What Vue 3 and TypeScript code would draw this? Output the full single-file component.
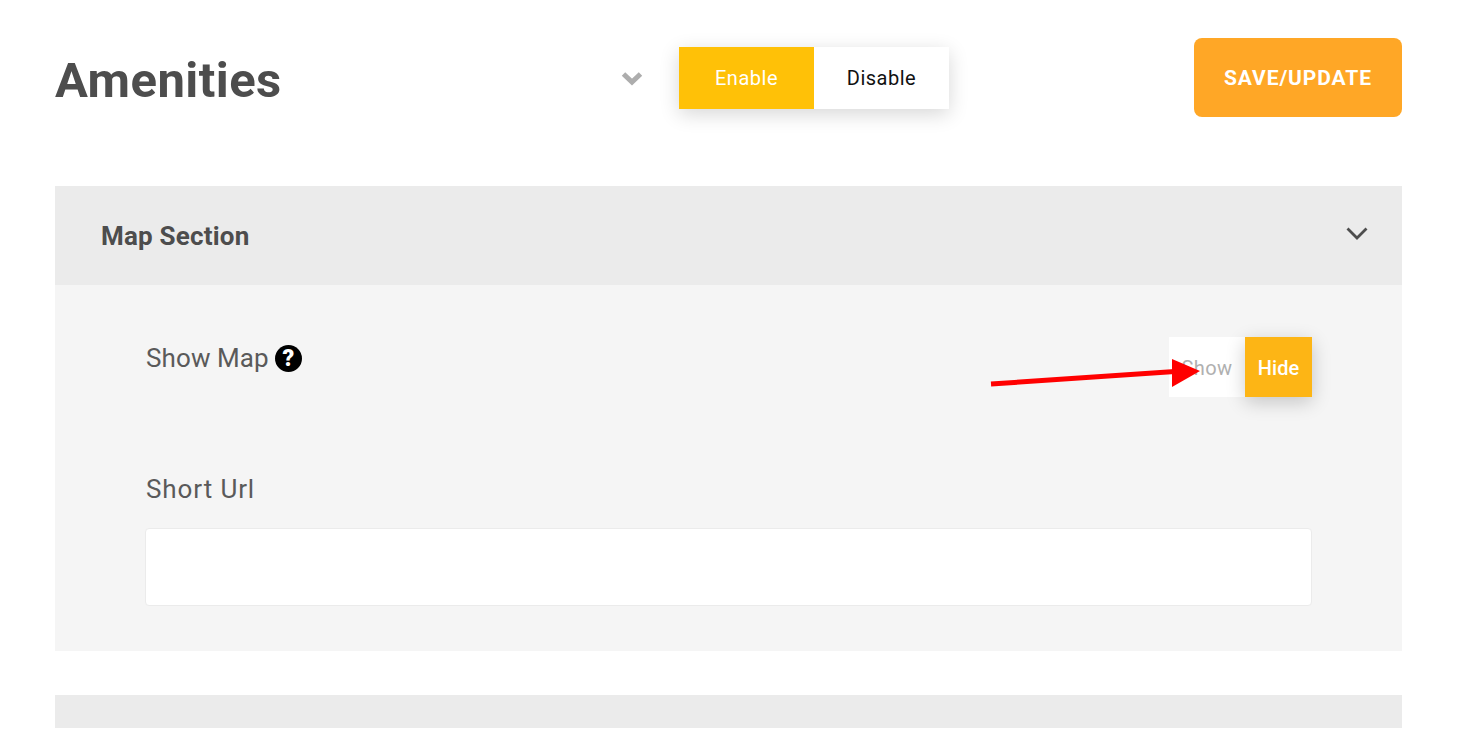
<script setup lang="ts">
import { ref } from 'vue';

const shortUrl = ref('');
</script>

<template>
	<div class="page">
		<header class="top">
			<h1 class="title">Amenities</h1>
			<div class="status">
				<svg class="status-chevron" width="24" height="16" viewBox="0 0 24 16">
					<path d="M3.5 4 L12 12 L20.5 4" fill="none" stroke="#adadad" stroke-width="5" />
				</svg>
				<div class="toggle-big">
					<span class="big-on">Enable</span>
					<span class="big-off">Disable</span>
				</div>
			</div>
			<button class="save" type="button">SAVE/UPDATE</button>
		</header>

		<section class="panel">
			<div class="panel-head">
				<h2>Map Section</h2>
				<svg width="24" height="16" viewBox="0 0 24 16">
					<path d="M2.5 2.5 L12 12 L21.5 2.5" fill="none" stroke="#4d4d4d" stroke-width="2.8" />
				</svg>
			</div>
			<div class="panel-body">
				<div class="row">
					<div class="label">
						Show Map
						<span class="help">?</span>
					</div>
					<div class="toggle-small">
						<span class="small-off">Show</span>
						<span class="small-on">Hide</span>
					</div>
				</div>
				<label class="label url-label" for="short-url">Short Url</label>
				<input id="short-url" v-model="shortUrl" class="url-input" type="text" />

				<svg class="arrow" width="220" height="40" viewBox="0 0 220 40">
					<path d="M1 30 L185 17.5" stroke="#ff0000" stroke-width="5" fill="none" />
					<path d="M182 5 L210 17 L182 33 Z" fill="#ff0000" />
				</svg>
			</div>
		</section>

		<section class="panel-next"></section>
	</div>
</template>

<style>
html,
body {
	background: #fff;
	overflow: hidden;
}
</style>

<style scoped>
.page {
	height: 733px;
	box-sizing: border-box;
	padding: 38px 60px 0 55px;
	font-family: Roboto, "Liberation Sans", sans-serif;
	color: #4d4d4d;
}

.top {
	display: flex;
	align-items: center;
	height: 79px;
}

.title {
	margin: 6px 0 0;
	font-size: 49px;
	font-weight: 700;
	line-height: 79px;
	width: 565px;
	letter-spacing: 0.45px;
}

.status {
	display: flex;
	align-items: center;
}

.status-chevron {
	margin-right: 35px;
}

.toggle-big {
	display: flex;
	height: 62px;
	line-height: 62px;
	text-align: center;
	font-size: 20px;
	letter-spacing: 0.5px;
	box-shadow: 0 5px 20px rgba(0, 0, 0, 0.16);
}

.big-on {
	width: 135px;
	background: #ffc107;
	color: #fff;
}

.big-off {
	width: 135px;
	background: #fff;
	color: #111;
}

.save {
	margin-left: auto;
	width: 208px;
	height: 79px;
	border: 0;
	border-radius: 8px;
	background: #ffa726;
	color: #fff;
	font-family: inherit;
	font-size: 21px;
	font-weight: 700;
	letter-spacing: 0.9px;
	padding: 0;
}

.panel {
	margin-top: 69px;
}

.panel-head {
	display: flex;
	align-items: center;
	justify-content: space-between;
	height: 99px;
	padding: 0 33px 0 46px;
	background: #ebebeb;
}

.panel-head h2 {
	margin: 0;
	font-size: 26px;
	font-weight: 700;
	letter-spacing: 0.2px;
}

.panel-head svg {
	margin-top: -4px;
}

.panel-body {
	position: relative;
	height: 366px;
	box-sizing: border-box;
	padding: 52px 90px 0;
	background: #f5f5f5;
}

.row {
	display: flex;
	justify-content: space-between;
	height: 131px;
}

.label {
	display: flex;
	align-items: center;
	gap: 6px;
	height: 42px;
	padding-left: 1px;
	font-size: 26px;
	letter-spacing: 0.1px;
	color: #5a5a5a;
}

.help {
	width: 27px;
	height: 27px;
	border-radius: 50%;
	background: #000;
	color: #fff;
	font-size: 23px;
	font-weight: 900;
	line-height: 27px;
	text-align: center;
	letter-spacing: 0;
}

.toggle-small {
	display: flex;
	height: 60px;
	line-height: 62px;
	font-size: 20px;
	text-align: center;
}

.small-off {
	width: 76px;
	background: #fff;
	color: #b0b0b0;
	letter-spacing: 0.4px;
}

.small-on {
	width: 67px;
	background: #fdb515;
	color: #fff;
	font-weight: 500;
	box-shadow: 0 5px 18px rgba(0, 0, 0, 0.2);
}

.url-label {
	letter-spacing: 0.9px;
}

.url-input {
	display: block;
	width: 100%;
	height: 78px;
	margin-top: 18px;
	box-sizing: border-box;
	border: 1px solid #ebebeb;
	border-radius: 4px;
	background: #fff;
	outline: 0;
}

.arrow {
	position: absolute;
	left: 935px;
	top: 69px;
}

.panel-next {
	height: 33px;
	margin-top: 44px;
	background: #ebebeb;
}
</style>
